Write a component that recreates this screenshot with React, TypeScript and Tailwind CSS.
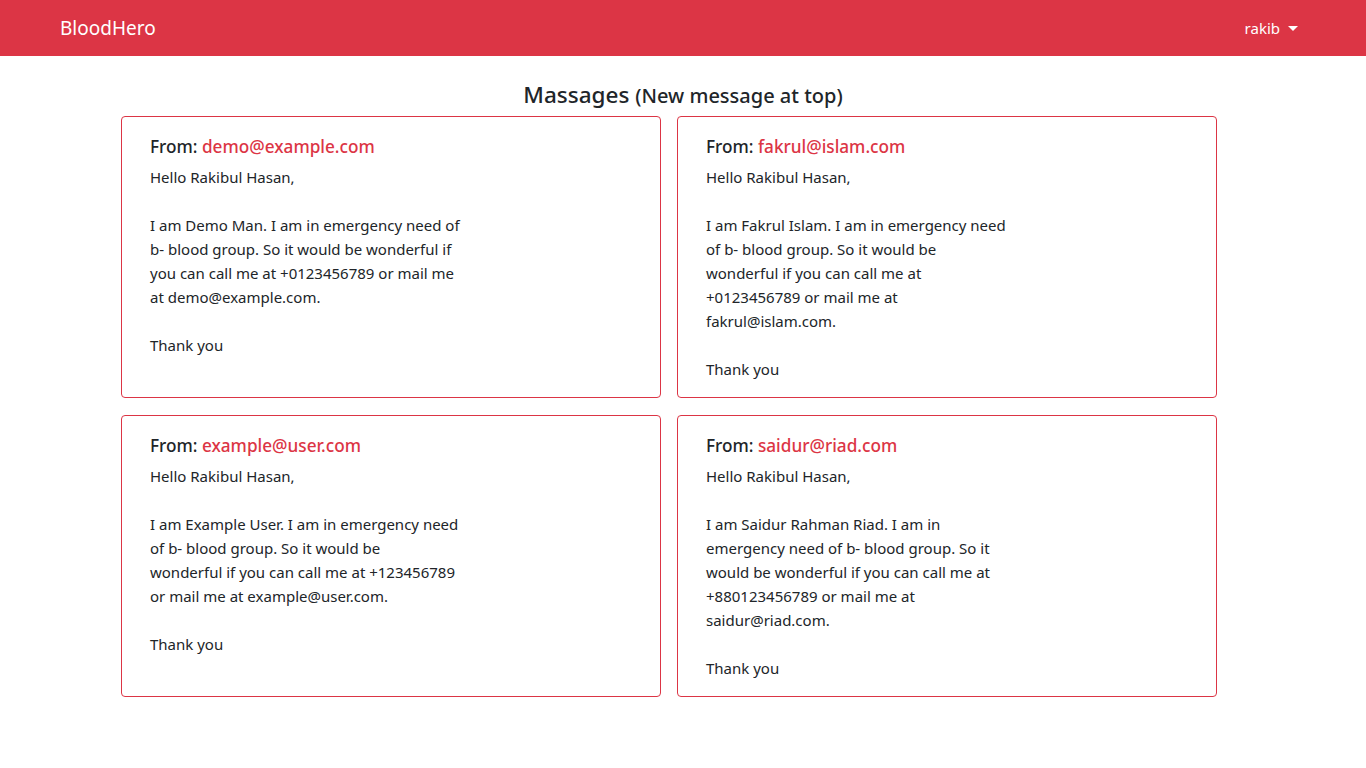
import React from "react";

type Message = {
  from: string;
  lines: string[];
};

const messages: Message[] = [
  {
    from: "demo@example.com",
    lines: [
      "I am Demo Man. I am in emergency need of",
      "b- blood group. So it would be wonderful if",
      "you can call me at +0123456789 or mail me",
      "at demo@example.com.",
    ],
  },
  {
    from: "fakrul@islam.com",
    lines: [
      "I am Fakrul Islam. I am in emergency need",
      "of b- blood group. So it would be",
      "wonderful if you can call me at",
      "+0123456789 or mail me at",
      "fakrul@islam.com.",
    ],
  },
  {
    from: "example@user.com",
    lines: [
      "I am Example User. I am in emergency need",
      "of b- blood group. So it would be",
      "wonderful if you can call me at +123456789",
      "or mail me at example@user.com.",
    ],
  },
  {
    from: "saidur@riad.com",
    lines: [
      "I am Saidur Rahman Riad. I am in",
      "emergency need of b- blood group. So it",
      "would be wonderful if you can call me at",
      "+880123456789 or mail me at",
      "saidur@riad.com.",
    ],
  },
];

function MessageCard({ msg }: { msg: Message }) {
  return (
    <div className="rounded border border-[#dc3545] bg-white pt-[18px] pb-[16px] px-[28px]">
      <h5 className="text-[17.2px] leading-[24px] font-medium text-[#212529]">
        From: <span className="text-[#dc3545]">{msg.from}</span>
      </h5>
      <div className="mt-[6px] text-[15px] leading-[24px] text-[#212529] whitespace-nowrap">
        <p>Hello Rakibul Hasan,</p>
        <p>&nbsp;</p>
        {msg.lines.map((l) => (
          <p key={l}>{l}</p>
        ))}
        <p>&nbsp;</p>
        <p>Thank you</p>
      </div>
    </div>
  );
}

export default function App() {
  return (
    <div className="min-h-screen bg-white font-['Noto_Sans',sans-serif] text-[#212529]">
      {/* ─── Navbar ─── */}
      <nav className="h-[56px] bg-[#dc3545] flex items-center justify-between pl-[60px] pr-[68px]">
        <a className="text-white text-[19px]">BloodHero</a>
        <div className="flex items-center gap-[8px] text-white text-[15px]">
          <span>rakib</span>
          <span className="inline-block w-0 h-0 border-t-[5px] border-t-white border-x-[5px] border-x-transparent" />
        </div>
      </nav>

      {/* ─── Messages ─── */}
      <main className="pt-[23px]">
        <h4 className="text-center text-[22.5px] leading-[32px] font-medium">
          Massages <span className="text-[20px]">(New message at top)</span>
        </h4>
        <div className="ml-[121px] w-[1096px] mt-[4px] grid grid-cols-2 gap-x-4 gap-y-[17px]">
          {messages.map((m) => (
            <MessageCard key={m.from} msg={m} />
          ))}
        </div>
      </main>
    </div>
  );
}
